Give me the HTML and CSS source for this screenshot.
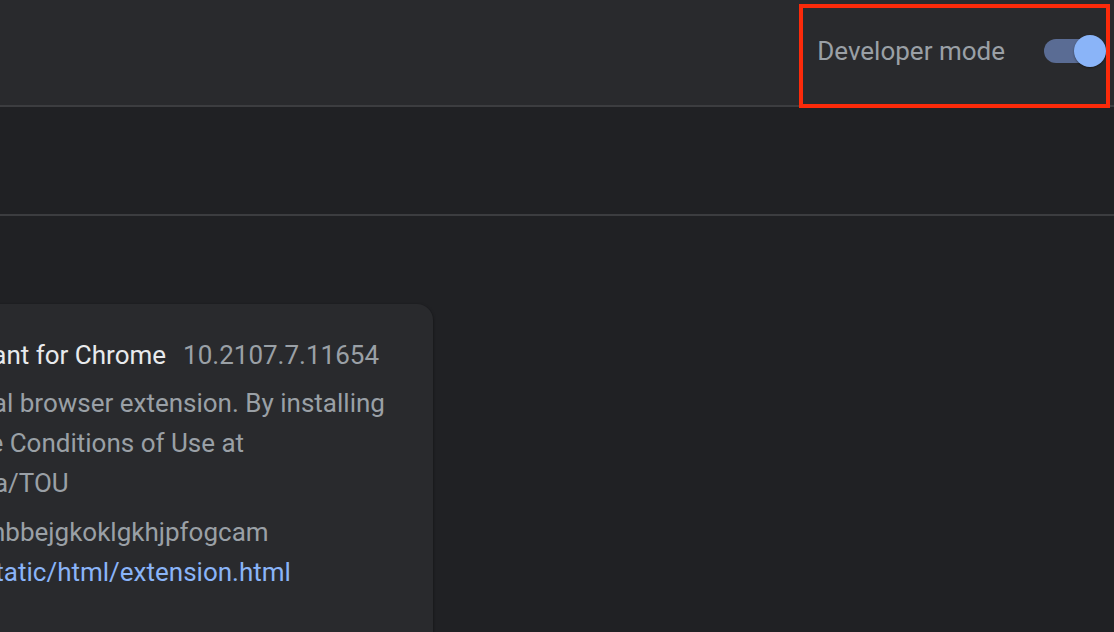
FILE: index.html
```html
<!DOCTYPE html>
<html lang="en">
<head>
  <meta charset="UTF-8" />
  <meta name="viewport" content="width=device-width, initial-scale=1" />
  <title>Extensions</title>
  <link rel="stylesheet" href="styles.css">
</head>
<body>
  <header class="toolbar">
    <div class="dev-mode">
      <span class="dev-label">Developer mode</span>
      <span class="toggle on">
        <span class="toggle-bar"></span>
        <span class="toggle-knob"></span>
      </span>
    </div>
  </header>

  <div class="dev-bar"></div>

  <main class="items">
    <div class="card">
      <div class="card-content">
        <div class="name-row">
          <span class="name">Amazon Assistant for Chrome</span>
          <span class="version">10.2107.7.11654</span>
        </div>
        <div class="description">
          Amazon's official browser extension. By installing<br>
          you agree to the Conditions of Use at<br>
          amazon.com/aa/TOU
        </div>
        <div class="detail">ID: pbjikboenpfhbbejgkoklgkhjpfogcam</div>
        <div class="detail">Inspect views <a href="#" class="link">static/html/extension.html</a></div>
      </div>
    </div>
  </main>
</body>
</html>
```

FILE: styles.css
```css
body {
  margin: 0;
  padding: 0;
  font-family: Roboto, 'Noto Sans', sans-serif;
  background: #202124;
  color: #9aa0a6;
  height: 632px;
  overflow: hidden;
}

.toolbar {
  height: 105px;
  background: #292a2d;
  border-bottom: 2px solid #3c3d40;
  display: flex;
  justify-content: flex-end;
}

.dev-mode {
  position: relative;
  display: flex;
  align-items: center;
  padding-right: 8px;
}

/* red highlight drawn over the setting */
.dev-mode::after {
  content: "";
  position: absolute;
  left: -18px;
  right: 4px;
  top: 4px;
  bottom: -3px;
  border: 4px solid #fb2a0a;
  pointer-events: none;
}

.dev-label {
  font-size: 26px;
  color: #9aa0a6;
  margin-right: 39px;
  margin-bottom: 3px;
}

.toggle {
  position: relative;
  width: 62px;
  height: 32px;
  display: flex;
  align-items: center;
  margin-bottom: 3px;
}

.toggle-bar {
  width: 56px;
  height: 24px;
  border-radius: 12px;
  background: #5a6c94;
}

.toggle-knob {
  position: absolute;
  right: 0;
  top: 0;
  width: 32px;
  height: 32px;
  border-radius: 50%;
  background: #8ab4f8;
  box-shadow: 0 1px 2px rgba(0,0,0,0.4);
}

.dev-bar {
  height: 107px;
  border-bottom: 2px solid #3c3d40;
}

.items {
  padding-top: 88px;
}

.card {
  margin-left: -400px;
  width: 833px;
  min-height: 400px;
  background: #292a2d;
  border-radius: 16px;
  box-shadow: 0 1px 3px rgba(0,0,0,0.5);
}

.card-content {
  padding: 31px 0 0 218px;
  font-size: 26px;
  line-height: 40px;
  white-space: nowrap;
}

.name-row {
  display: flex;
  gap: 17px;
}

.name {
  color: #e8eaed;
}

.version {
  color: #9aa0a6;
}

.description {
  margin-top: 8px;
}

.detail {
  margin-top: 9px;
}

.detail + .detail {
  margin-top: 0;
}

.link {
  color: #8ab4f8;
  text-decoration: none;
}
```
